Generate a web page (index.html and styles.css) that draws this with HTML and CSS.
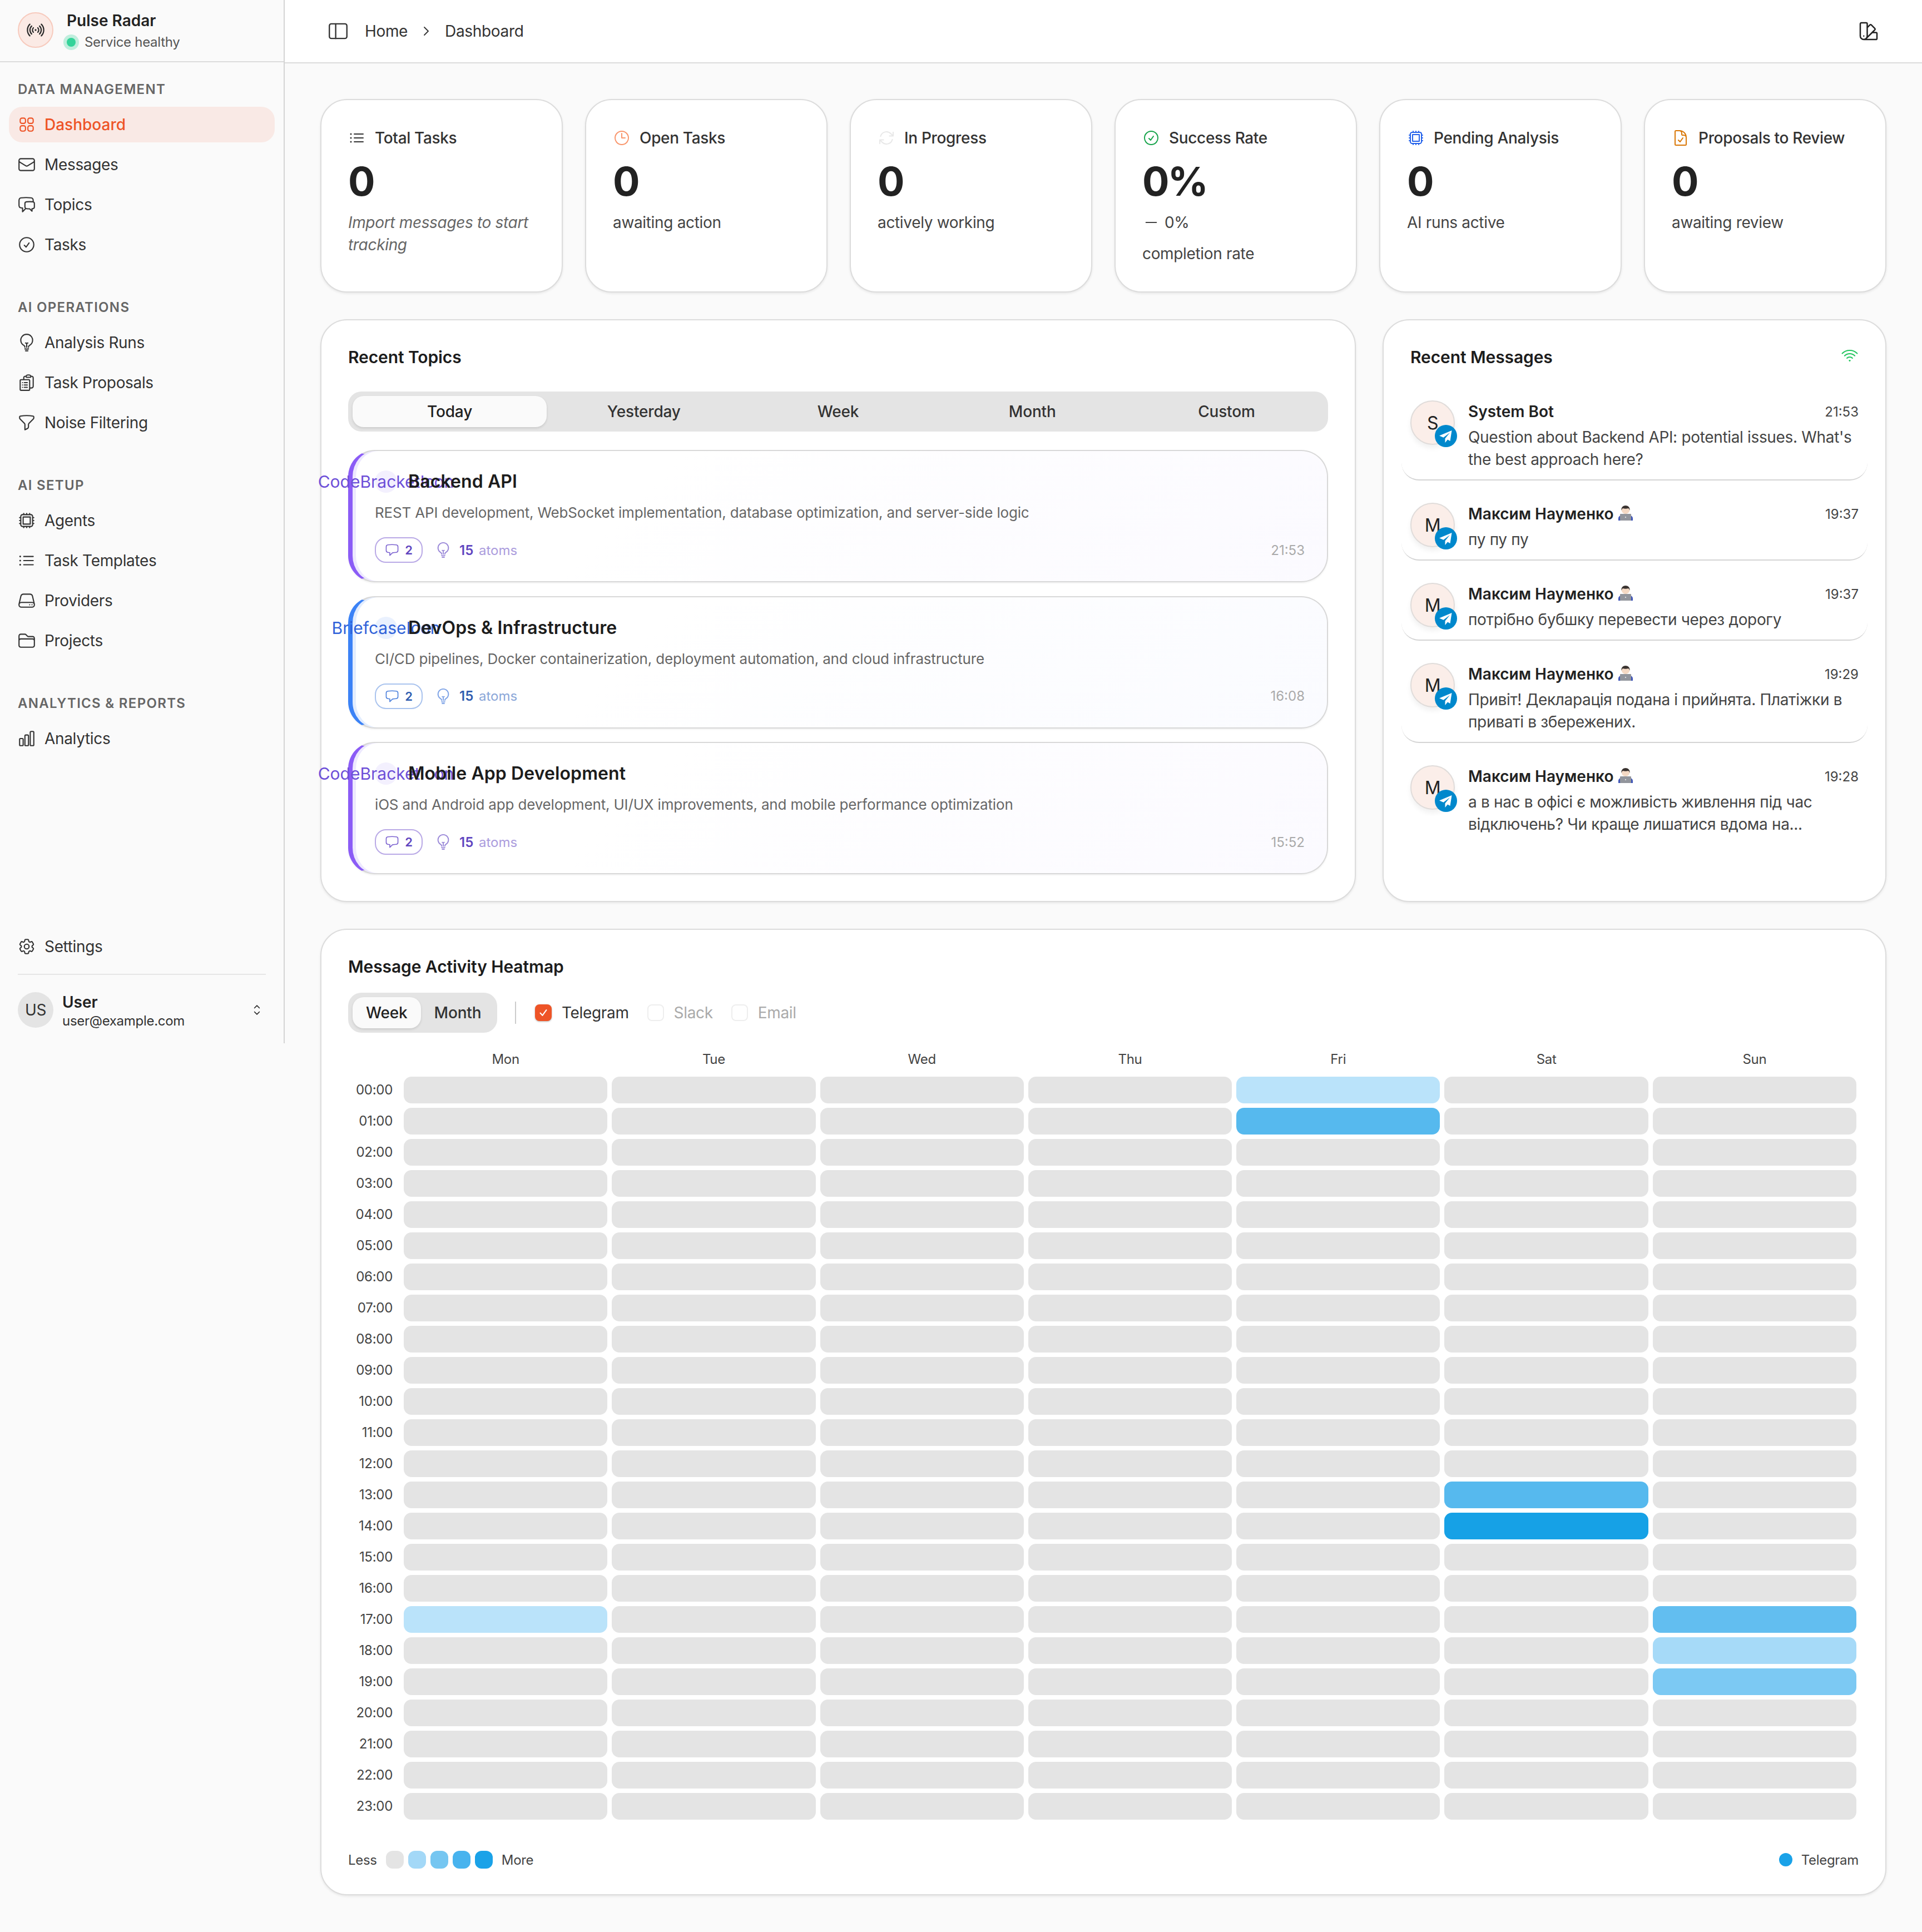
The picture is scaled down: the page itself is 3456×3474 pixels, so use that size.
FILE: index.html
```html
<!DOCTYPE html>
<html lang="en">
<head>
<meta charset="utf-8">
<title>Pulse Radar</title>
<link rel="stylesheet" href="styles.css">
</head>
<body>
<svg class="sprite" xmlns="http://www.w3.org/2000/svg">
<symbol id="i-grid" viewBox="0 0 24 24"><path d="M3.75 6A2.25 2.25 0 0 1 6 3.75h2.25A2.25 2.25 0 0 1 10.5 6v2.25a2.25 2.25 0 0 1-2.25 2.25H6a2.25 2.25 0 0 1-2.25-2.25V6ZM3.75 15.75A2.25 2.25 0 0 1 6 13.5h2.25a2.25 2.25 0 0 1 2.25 2.25V18a2.25 2.25 0 0 1-2.25 2.25H6A2.25 2.25 0 0 1 3.75 18v-2.25ZM13.5 6a2.25 2.25 0 0 1 2.25-2.25H18A2.25 2.25 0 0 1 20.25 6v2.25A2.25 2.25 0 0 1 18 10.5h-2.25a2.25 2.25 0 0 1-2.25-2.25V6ZM13.5 15.75a2.25 2.25 0 0 1 2.25-2.25H18a2.25 2.25 0 0 1 2.25 2.25V18A2.25 2.25 0 0 1 18 20.25h-2.25A2.25 2.25 0 0 1 13.5 18v-2.25Z"/></symbol>
<symbol id="i-mail" viewBox="0 0 24 24"><path d="M21.75 6.75v10.5a2.25 2.25 0 0 1-2.25 2.25h-15a2.25 2.25 0 0 1-2.25-2.25V6.75m19.5 0A2.25 2.25 0 0 0 19.5 4.5h-15a2.25 2.25 0 0 0-2.25 2.25m19.5 0v.243a2.25 2.25 0 0 1-1.07 1.916l-7.5 4.615a2.25 2.25 0 0 1-2.36 0L3.32 8.91a2.25 2.25 0 0 1-1.07-1.916V6.75"/></symbol>
<symbol id="i-chats" viewBox="0 0 24 24"><path d="M20.25 8.511c.884.284 1.5 1.128 1.5 2.097v4.286c0 1.136-.847 2.1-1.98 2.193-.34.027-.68.052-1.02.072v3.091l-3-3c-1.354 0-2.694-.055-4.02-.163a2.115 2.115 0 0 1-.825-.242m9.345-8.334a2.126 2.126 0 0 0-.476-.095 48.64 48.64 0 0 0-8.048 0c-1.131.094-1.976 1.057-1.976 2.192v4.286c0 .837.46 1.58 1.155 1.951m9.345-8.334V6.637c0-1.621-1.152-3.026-2.76-3.235A48.455 48.455 0 0 0 11.25 3c-2.115 0-4.198.137-6.24.402-1.608.209-2.76 1.614-2.76 3.235v6.226c0 1.621 1.152 3.026 2.76 3.235.577.075 1.157.14 1.74.194V21l4.155-4.155"/></symbol>
<symbol id="i-check" viewBox="0 0 24 24"><path d="M9 12.75 11.25 15 15 9.75M21 12a9 9 0 1 1-18 0 9 9 0 0 1 18 0Z"/></symbol>
<symbol id="i-bulb" viewBox="0 0 24 24"><path d="M12 18v-5.25m0 0a6.01 6.01 0 0 0 1.5-.189m-1.5.189a6.01 6.01 0 0 1-1.5-.189m3.75 7.478a12.06 12.06 0 0 1-4.5 0m3.75 2.383a14.406 14.406 0 0 1-3 0M14.25 18v-.192c0-.983.658-1.823 1.508-2.316a7.5 7.5 0 1 0-7.517 0c.85.493 1.509 1.333 1.509 2.316V18"/></symbol>
<symbol id="i-clip" viewBox="0 0 24 24"><path d="M9 12h3.75M9 15h3.75M9 18h3.75m3 .75H18a2.25 2.25 0 0 0 2.25-2.25V6.108c0-1.135-.845-2.098-1.976-2.192a48.424 48.424 0 0 0-1.123-.08m-5.801 0c-.065.21-.1.433-.1.664 0 .414.336.75.75.75h4.5a.75.75 0 0 0 .75-.75 2.25 2.25 0 0 0-.1-.664m-5.8 0A2.251 2.251 0 0 1 13.5 2.25H15c1.012 0 1.867.668 2.15 1.586m-5.8 0c-.376.023-.75.05-1.124.08C9.095 4.01 8.25 4.973 8.25 6.108V8.25m0 0H4.875c-.621 0-1.125.504-1.125 1.125v11.25c0 .621.504 1.125 1.125 1.125h9.75c.621 0 1.125-.504 1.125-1.125V9.375c0-.621-.504-1.125-1.125-1.125H8.25ZM6.75 12h.008v.008H6.75V12Zm0 3h.008v.008H6.75V15Zm0 3h.008v.008H6.75V18Z"/></symbol>
<symbol id="i-funnel" viewBox="0 0 24 24"><path d="M12 3c2.755 0 5.455.232 8.083.678.533.09.917.556.917 1.096v1.044a2.25 2.25 0 0 1-.659 1.591l-5.432 5.432a2.25 2.25 0 0 0-.659 1.591v2.927a2.25 2.25 0 0 1-1.244 2.013L9.75 21v-6.568a2.25 2.25 0 0 0-.659-1.591L3.659 7.409A2.25 2.25 0 0 1 3 5.818V4.774c0-.54.384-1.006.917-1.096A48.32 48.32 0 0 1 12 3Z"/></symbol>
<symbol id="i-cpu" viewBox="0 0 24 24"><path d="M8.25 3v1.5M4.5 8.25H3m18 0h-1.5M4.5 12H3m18 0h-1.5m-15 3.75H3m18 0h-1.5M8.25 19.5V21M12 3v1.5m0 15V21m3.75-18v1.5m0 15V21m-9-1.5h10.5a2.25 2.25 0 0 0 2.25-2.25V6.75a2.25 2.25 0 0 0-2.25-2.25H6.75A2.25 2.25 0 0 0 4.5 6.75v10.5a2.25 2.25 0 0 0 2.25 2.25Zm.75-12h9v9h-9v-9Z"/></symbol>
<symbol id="i-list" viewBox="0 0 24 24"><path d="M8.25 6.75h12M8.25 12h12m-12 5.25h12M3.75 6.75h.007v.008H3.75V6.75Zm.375 0a.375.375 0 1 1-.75 0 .375.375 0 0 1 .75 0ZM3.75 12h.007v.008H3.75V12Zm.375 0a.375.375 0 1 1-.75 0 .375.375 0 0 1 .75 0Zm-.375 5.25h.007v.008H3.75v-.008Zm.375 0a.375.375 0 1 1-.75 0 .375.375 0 0 1 .75 0Z"/></symbol>
<symbol id="i-server" viewBox="0 0 24 24"><path d="M21.75 17.25v-.228a4.5 4.5 0 0 0-.12-1.03l-2.268-9.64a3.375 3.375 0 0 0-3.285-2.602H7.923a3.375 3.375 0 0 0-3.285 2.602l-2.268 9.64a4.5 4.5 0 0 0-.12 1.03v.228m19.5 0a3 3 0 0 1-3 3H5.25a3 3 0 0 1-3-3m19.5 0a3 3 0 0 0-3-3H5.25a3 3 0 0 0-3 3m16.5 0h.008v.008h-.008v-.008Zm-3 0h.008v.008h-.008v-.008Z"/></symbol>
<symbol id="i-folder" viewBox="0 0 24 24"><path d="M2.25 12.75V12A2.25 2.25 0 0 1 4.5 9.75h15A2.25 2.25 0 0 1 21.75 12v.75m-8.69-6.44-2.12-2.12a1.5 1.5 0 0 0-1.061-.44H4.5A2.25 2.25 0 0 0 2.25 6v12a2.25 2.25 0 0 0 2.25 2.25h15A2.25 2.25 0 0 0 21.75 18V9a2.25 2.25 0 0 0-2.25-2.25h-5.379a1.5 1.5 0 0 1-1.06-.44Z"/></symbol>
<symbol id="i-chart" viewBox="0 0 24 24"><path d="M3 13.125C3 12.504 3.504 12 4.125 12h2.25c.621 0 1.125.504 1.125 1.125v6.75C7.5 20.496 6.996 21 6.375 21h-2.25A1.125 1.125 0 0 1 3 19.875v-6.75ZM9.75 8.625c0-.621.504-1.125 1.125-1.125h2.25c.621 0 1.125.504 1.125 1.125v11.25c0 .621-.504 1.125-1.125 1.125h-2.25a1.125 1.125 0 0 1-1.125-1.125V8.625ZM16.5 4.125c0-.621.504-1.125 1.125-1.125h2.25C20.496 3 21 3.504 21 4.125v15.75c0 .621-.504 1.125-1.125 1.125h-2.25a1.125 1.125 0 0 1-1.125-1.125V4.125Z"/></symbol>
<symbol id="i-cog" viewBox="0 0 24 24"><path d="M9.594 3.94c.09-.542.56-.94 1.11-.94h2.593c.55 0 1.02.398 1.11.94l.213 1.281c.063.374.313.686.645.87.074.04.147.083.22.127.325.196.72.257 1.075.124l1.217-.456a1.125 1.125 0 0 1 1.37.49l1.296 2.247a1.125 1.125 0 0 1-.26 1.431l-1.003.827c-.293.241-.438.613-.43.992a7.723 7.723 0 0 1 0 .255c-.008.378.137.75.43.991l1.004.827c.424.35.534.955.26 1.43l-1.298 2.247a1.125 1.125 0 0 1-1.369.491l-1.217-.456c-.355-.133-.75-.072-1.076.124a6.47 6.47 0 0 1-.22.128c-.331.183-.581.495-.644.869l-.213 1.281c-.09.543-.56.94-1.11.94h-2.594c-.55 0-1.019-.398-1.11-.94l-.213-1.281c-.062-.374-.312-.686-.644-.87a6.52 6.52 0 0 1-.22-.127c-.325-.196-.72-.257-1.076-.124l-1.217.456a1.125 1.125 0 0 1-1.369-.49l-1.297-2.247a1.125 1.125 0 0 1 .26-1.431l1.004-.827c.292-.24.437-.613.43-.991a6.932 6.932 0 0 1 0-.255c.007-.38-.138-.751-.43-.992l-1.004-.827a1.125 1.125 0 0 1-.26-1.43l1.297-2.247a1.125 1.125 0 0 1 1.37-.491l1.216.456c.356.133.751.072 1.076-.124.072-.044.146-.086.22-.128.332-.183.582-.495.644-.869l.214-1.28Z"/><path d="M15 12a3 3 0 1 1-6 0 3 3 0 0 1 6 0Z"/></symbol>
<symbol id="i-updown" viewBox="0 0 24 24"><path d="M8.25 15 12 18.75 15.75 15m-7.5-6L12 5.25 15.75 9"/></symbol>
<symbol id="i-signal" viewBox="0 0 24 24"><path d="M9.348 14.652a3.75 3.75 0 0 1 0-5.304m5.304 0a3.75 3.75 0 0 1 0 5.304m-7.425 2.121a6.75 6.75 0 0 1 0-9.546m9.546 0a6.75 6.75 0 0 1 0 9.546M5.106 18.894c-3.808-3.807-3.808-9.98 0-13.788m13.788 0c3.808 3.807 3.808 9.98 0 13.788M12 12h.008v.008H12V12Zm.375 0a.375.375 0 1 1-.75 0 .375.375 0 0 1 .75 0Z"/></symbol>
<symbol id="i-wifi" viewBox="0 0 24 24"><path d="M8.288 15.038a5.25 5.25 0 0 1 7.424 0M5.106 11.856c3.807-3.808 9.98-3.808 13.788 0M1.924 8.674c5.565-5.565 14.587-5.565 20.152 0M12.53 18.22l-.53.53-.53-.53a.75.75 0 0 1 1.06 0Z"/></symbol>
<symbol id="i-clock" viewBox="0 0 24 24"><path d="M12 6v6h4.5m4.5 0a9 9 0 1 1-18 0 9 9 0 0 1 18 0Z"/></symbol>
<symbol id="i-refresh" viewBox="0 0 24 24"><path d="M16.023 9.348h4.992v-.001M2.985 19.644v-4.992m0 0h4.992m-4.993 0 3.181 3.183a8.25 8.25 0 0 0 13.803-3.7M4.031 9.865a8.25 8.25 0 0 1 13.803-3.7l3.181 3.182m0-4.991v4.99"/></symbol>
<symbol id="i-doc" viewBox="0 0 24 24"><path d="M10.125 2.25h-4.5c-.621 0-1.125.504-1.125 1.125v17.25c0 .621.504 1.125 1.125 1.125h12.75c.621 0 1.125-.504 1.125-1.125v-9M10.125 2.25h.375a9 9 0 0 1 9 9v.375M10.125 2.25A3.375 3.375 0 0 1 13.5 5.625v1.5c0 .621.504 1.125 1.125 1.125h1.5a3.375 3.375 0 0 1 3.375 3.375M9 15l2.25 2.25L15 12"/></symbol>
<symbol id="i-bubble" viewBox="0 0 24 24"><path d="M2.25 12.76c0 1.6 1.123 2.994 2.707 3.227 1.087.16 2.185.283 3.293.369V21l4.076-4.076a1.526 1.526 0 0 1 1.037-.443 48.282 48.282 0 0 0 5.68-.494c1.584-.233 2.707-1.626 2.707-3.228V6.741c0-1.602-1.123-2.995-2.707-3.228A48.394 48.394 0 0 0 12 3c-2.392 0-4.744.175-7.043.513C3.373 3.746 2.25 5.14 2.25 6.741v6.018Z"/></symbol>
<symbol id="i-swatch" viewBox="0 0 24 24"><path d="M4.098 19.902a3.75 3.75 0 0 0 5.304 0l6.401-6.402M6.75 21A3.75 3.75 0 0 1 3 17.25V4.125C3 3.504 3.504 3 4.125 3h5.25c.621 0 1.125.504 1.125 1.125v4.072M6.75 21a3.75 3.75 0 0 0 3.75-3.75V8.197M6.75 21h13.125c.621 0 1.125-.504 1.125-1.125v-5.25c0-.621-.504-1.125-1.125-1.125h-4.072M10.5 8.197l2.88-2.88c.438-.439 1.15-.439 1.59 0l3.712 3.713c.44.44.44 1.152 0 1.59l-2.879 2.88M6.75 17.25h.008v.008H6.75v-.008Z"/></symbol>
<symbol id="i-panel" viewBox="0 0 24 24"><rect x="3" y="4.5" width="18" height="15" rx="2"/><path d="M9.5 4.5v15"/></symbol>
<symbol id="i-right" viewBox="0 0 24 24"><path d="m9 5 7 7-7 7"/></symbol>
<symbol id="i-minus" viewBox="0 0 24 24"><path d="M5 12h14"/></symbol>
<symbol id="i-tick" viewBox="0 0 24 24"><path d="m7 12.5 3.5 4L17 7.5"/></symbol>
<symbol id="i-tg" viewBox="0 0 40 40"><circle cx="20" cy="20" r="20" fill="#0088cc" stroke="none"/><path d="M30.5 10 8 19.5l7.5 3.2L27 14l-8.5 10.5V32l4.5-5.5 4.5 2.5Z" fill="#fff" stroke="none"/></symbol>
<symbol id="i-coder" viewBox="0 0 28 28"><path d="M1 28v-4c0-4 5-7 13-7s13 3 13 7v4Z" fill="#3f55b8" stroke="none"/><circle cx="14" cy="9" r="7.2" fill="#f4d9c4" stroke="none"/><path d="M6.6 10C5.6 4 10 1 14 1s8.4 3 7.4 9c-.6-2-1.4-3.6-2.4-4-3 1-7 1-10 0-1 .4-1.8 2-2.4 4Z" fill="#3a3330" stroke="none"/><rect x="4" y="16" width="20" height="12" rx="1" fill="#92959c" stroke="none"/><circle cx="14" cy="22" r="1.1" fill="#eee" stroke="none"/></symbol>
</svg>

<aside class="sidebar">
  <div class="brand">
    <div class="brand-logo"><svg class="ic ic-logo"><use href="#i-signal"/></svg></div>
    <div class="brand-text">
      <div class="brand-name">Pulse Radar</div>
      <div class="brand-status"><span class="dot"></span>Service healthy</div>
    </div>
  </div>
  <nav class="nav">
    <section class="group">
      <h3 class="group-label">Data Management</h3>
      <a class="item active"><svg class="ic"><use href="#i-grid"/></svg>Dashboard</a>
      <a class="item"><svg class="ic"><use href="#i-mail"/></svg>Messages</a>
      <a class="item"><svg class="ic"><use href="#i-chats"/></svg>Topics</a>
      <a class="item"><svg class="ic"><use href="#i-check"/></svg>Tasks</a>
    </section>
    <section class="group">
      <h3 class="group-label">AI Operations</h3>
      <a class="item"><svg class="ic"><use href="#i-bulb"/></svg>Analysis Runs</a>
      <a class="item"><svg class="ic"><use href="#i-clip"/></svg>Task Proposals</a>
      <a class="item"><svg class="ic"><use href="#i-funnel"/></svg>Noise Filtering</a>
    </section>
    <section class="group">
      <h3 class="group-label">AI Setup</h3>
      <a class="item"><svg class="ic"><use href="#i-cpu"/></svg>Agents</a>
      <a class="item"><svg class="ic"><use href="#i-list"/></svg>Task Templates</a>
      <a class="item"><svg class="ic"><use href="#i-server"/></svg>Providers</a>
      <a class="item"><svg class="ic"><use href="#i-folder"/></svg>Projects</a>
    </section>
    <section class="group">
      <h3 class="group-label">Analytics &amp; Reports</h3>
      <a class="item"><svg class="ic"><use href="#i-chart"/></svg>Analytics</a>
    </section>
  </nav>
  <div class="side-foot">
    <a class="item"><svg class="ic"><use href="#i-cog"/></svg>Settings</a>
    <div class="side-rule"></div>
    <div class="user">
      <div class="user-av">US</div>
      <div class="user-text">
        <div class="user-name">User</div>
        <div class="user-mail">user@example.com</div>
      </div>
      <svg class="ic ic-sm"><use href="#i-updown"/></svg>
    </div>
  </div>
</aside>

<div class="main">
  <header class="topbar">
    <div class="crumbs">
      <svg class="ic ic-panel"><use href="#i-panel"/></svg>
      <span class="crumb">Home</span>
      <svg class="ic ic-chev"><use href="#i-right"/></svg>
      <span class="crumb">Dashboard</span>
    </div>
    <svg class="ic ic-top"><use href="#i-swatch"/></svg>
  </header>

  <main class="content">
    <div class="stats">
      <div class="card stat">
        <div class="stat-head"><svg class="ic"><use href="#i-list"/></svg>Total Tasks</div>
        <div class="stat-num">0</div>
        <div class="stat-sub stat-hint">Import messages to start tracking</div>
      </div>
      <div class="card stat">
        <div class="stat-head"><svg class="ic c-orange"><use href="#i-clock"/></svg>Open Tasks</div>
        <div class="stat-num">0</div>
        <div class="stat-sub">awaiting action</div>
      </div>
      <div class="card stat">
        <div class="stat-head"><svg class="ic c-faint"><use href="#i-refresh"/></svg>In Progress</div>
        <div class="stat-num">0</div>
        <div class="stat-sub">actively working</div>
      </div>
      <div class="card stat">
        <div class="stat-head"><svg class="ic c-green"><use href="#i-check"/></svg>Success Rate</div>
        <div class="stat-num">0%</div>
        <div class="stat-sub stat-trend"><svg class="ic"><use href="#i-minus"/></svg>0%</div>
        <div class="stat-sub stat-extra">completion rate</div>
      </div>
      <div class="card stat">
        <div class="stat-head"><svg class="ic c-blue"><use href="#i-cpu"/></svg>Pending Analysis</div>
        <div class="stat-num">0</div>
        <div class="stat-sub">AI runs active</div>
      </div>
      <div class="card stat">
        <div class="stat-head"><svg class="ic c-amber"><use href="#i-doc"/></svg>Proposals to Review</div>
        <div class="stat-num">0</div>
        <div class="stat-sub">awaiting review</div>
      </div>
    </div>

    <div class="split">
      <section class="card panel">
        <h2 class="panel-title">Recent Topics</h2>
        <div class="tabs">
          <button class="tab on">Today</button>
          <button class="tab">Yesterday</button>
          <button class="tab">Week</button>
          <button class="tab">Month</button>
          <button class="tab">Custom</button>
        </div>
        <div class="topics">
          <article class="topic">
            <div class="topic-head"><div class="topic-ico t-purple">CodeBracketIcon</div><h4 class="topic-title">Backend API</h4></div>
            <p class="topic-desc">REST API development, WebSocket implementation, database optimization, and server-side logic</p>
            <div class="topic-meta">
              <span class="chip"><svg class="ic ic-xs"><use href="#i-bubble"/></svg>2</span>
              <svg class="ic ic-bulb"><use href="#i-bulb"/></svg>
              <span class="atoms"><b>15</b> atoms</span>
              <span class="topic-time">21:53</span>
            </div>
          </article>
          <article class="topic topic-blue">
            <div class="topic-head"><div class="topic-ico t-blue">BriefcaseIcon</div><h4 class="topic-title">DevOps &amp; Infrastructure</h4></div>
            <p class="topic-desc">CI/CD pipelines, Docker containerization, deployment automation, and cloud infrastructure</p>
            <div class="topic-meta">
              <span class="chip chip-blue"><svg class="ic ic-xs"><use href="#i-bubble"/></svg>2</span>
              <svg class="ic ic-bulb ic-bulb-blue"><use href="#i-bulb"/></svg>
              <span class="atoms atoms-blue"><b>15</b> atoms</span>
              <span class="topic-time">16:08</span>
            </div>
          </article>
          <article class="topic">
            <div class="topic-head"><div class="topic-ico t-purple">CodeBracketIcon</div><h4 class="topic-title">Mobile App Development</h4></div>
            <p class="topic-desc">iOS and Android app development, UI/UX improvements, and mobile performance optimization</p>
            <div class="topic-meta">
              <span class="chip"><svg class="ic ic-xs"><use href="#i-bubble"/></svg>2</span>
              <svg class="ic ic-bulb"><use href="#i-bulb"/></svg>
              <span class="atoms"><b>15</b> atoms</span>
              <span class="topic-time">15:52</span>
            </div>
          </article>
        </div>
      </section>

      <section class="card panel">
        <div class="panel-head"><h2 class="panel-title">Recent Messages</h2><svg class="ic c-wifi"><use href="#i-wifi"/></svg></div>
        <div class="msgs">
          <div class="msg">
            <div class="msg-av">S<svg class="tg"><use href="#i-tg"/></svg></div>
            <div class="msg-body">
              <div class="msg-top"><span class="msg-name">System Bot</span><span class="msg-time">21:53</span></div>
              <p class="msg-text">Question about Backend API: potential issues. What's the best approach here?</p>
            </div>
          </div>
          <div class="msg">
            <div class="msg-av">M<svg class="tg"><use href="#i-tg"/></svg></div>
            <div class="msg-body">
              <div class="msg-top"><span class="msg-name">Максим Науменко<svg class="emoji"><use href="#i-coder"/></svg></span><span class="msg-time">19:37</span></div>
              <p class="msg-text">пу пу пу</p>
            </div>
          </div>
          <div class="msg">
            <div class="msg-av">M<svg class="tg"><use href="#i-tg"/></svg></div>
            <div class="msg-body">
              <div class="msg-top"><span class="msg-name">Максим Науменко<svg class="emoji"><use href="#i-coder"/></svg></span><span class="msg-time">19:37</span></div>
              <p class="msg-text">потрібно бубшку перевести через дорогу</p>
            </div>
          </div>
          <div class="msg">
            <div class="msg-av">M<svg class="tg"><use href="#i-tg"/></svg></div>
            <div class="msg-body">
              <div class="msg-top"><span class="msg-name">Максим Науменко<svg class="emoji"><use href="#i-coder"/></svg></span><span class="msg-time">19:29</span></div>
              <p class="msg-text">Привіт! Декларація подана і прийнята. Платіжки в приваті в збережених.</p>
            </div>
          </div>
          <div class="msg msg-last">
            <div class="msg-av">M<svg class="tg"><use href="#i-tg"/></svg></div>
            <div class="msg-body">
              <div class="msg-top"><span class="msg-name">Максим Науменко<svg class="emoji"><use href="#i-coder"/></svg></span><span class="msg-time">19:28</span></div>
              <p class="msg-text">а в нас в офісі є можливість живлення під час відключень? Чи краще лишатися вдома на...</p>
            </div>
          </div>
        </div>
      </section>
    </div>

    <section class="card panel heat">
      <h2 class="panel-title">Message Activity Heatmap</h2>
      <div class="heat-bar">
        <div class="tabs tabs-inline">
          <button class="tab on">Week</button>
          <button class="tab">Month</button>
        </div>
        <span class="vr"></span>
        <label class="src"><span class="cb cb-on"><svg class="ic"><use href="#i-tick"/></svg></span>Telegram</label>
        <label class="src src-off"><span class="cb"></span>Slack</label>
        <label class="src src-off"><span class="cb"></span>Email</label>
      </div>
      <div class="grid">
        <span></span><span class="day">Mon</span><span class="day">Tue</span><span class="day">Wed</span><span class="day">Thu</span><span class="day">Fri</span><span class="day">Sat</span><span class="day">Sun</span>
        <span class="hr">00:00</span><i></i><i></i><i></i><i></i><i class="l1"></i><i></i><i></i>
        <span class="hr">01:00</span><i></i><i></i><i></i><i></i><i class="l3"></i><i></i><i></i>
        <span class="hr">02:00</span><i></i><i></i><i></i><i></i><i></i><i></i><i></i>
        <span class="hr">03:00</span><i></i><i></i><i></i><i></i><i></i><i></i><i></i>
        <span class="hr">04:00</span><i></i><i></i><i></i><i></i><i></i><i></i><i></i>
        <span class="hr">05:00</span><i></i><i></i><i></i><i></i><i></i><i></i><i></i>
        <span class="hr">06:00</span><i></i><i></i><i></i><i></i><i></i><i></i><i></i>
        <span class="hr">07:00</span><i></i><i></i><i></i><i></i><i></i><i></i><i></i>
        <span class="hr">08:00</span><i></i><i></i><i></i><i></i><i></i><i></i><i></i>
        <span class="hr">09:00</span><i></i><i></i><i></i><i></i><i></i><i></i><i></i>
        <span class="hr">10:00</span><i></i><i></i><i></i><i></i><i></i><i></i><i></i>
        <span class="hr">11:00</span><i></i><i></i><i></i><i></i><i></i><i></i><i></i>
        <span class="hr">12:00</span><i></i><i></i><i></i><i></i><i></i><i></i><i></i>
        <span class="hr">13:00</span><i></i><i></i><i></i><i></i><i></i><i class="l3"></i><i></i>
        <span class="hr">14:00</span><i></i><i></i><i></i><i></i><i></i><i class="l4"></i><i></i>
        <span class="hr">15:00</span><i></i><i></i><i></i><i></i><i></i><i></i><i></i>
        <span class="hr">16:00</span><i></i><i></i><i></i><i></i><i></i><i></i><i></i>
        <span class="hr">17:00</span><i class="l1"></i><i></i><i></i><i></i><i></i><i></i><i class="l3b"></i>
        <span class="hr">18:00</span><i></i><i></i><i></i><i></i><i></i><i></i><i class="l1b"></i>
        <span class="hr">19:00</span><i></i><i></i><i></i><i></i><i></i><i></i><i class="l2"></i>
        <span class="hr">20:00</span><i></i><i></i><i></i><i></i><i></i><i></i><i></i>
        <span class="hr">21:00</span><i></i><i></i><i></i><i></i><i></i><i></i><i></i>
        <span class="hr">22:00</span><i></i><i></i><i></i><i></i><i></i><i></i><i></i>
        <span class="hr">23:00</span><i></i><i></i><i></i><i></i><i></i><i></i><i></i>
      </div>
      <div class="legend">
        <div class="legend-scale">Less<span class="sw sw0"></span><span class="sw sw1"></span><span class="sw sw2"></span><span class="sw sw3"></span><span class="sw sw4"></span>More</div>
        <div class="legend-src"><span class="legend-dot"></span>Telegram</div>
      </div>
    </section>
  </main>
</div>
</body>
</html>
```
FILE: styles.css
```css
* { box-sizing: border-box; }
html, body { margin: 0; padding: 0; }
body {
  display: flex;
  align-items: flex-start;
  background: #fafafa;
  color: #2b2b2b;
  font-family: Inter, "Noto Sans", sans-serif;
  font-size: 28px;
}
body * { letter-spacing: -0.012em; }
h2, h3, h4, p { margin: 0; }
.sprite { display: none; }
.ic {
  width: 32px; height: 32px; flex: none;
  fill: none; stroke: currentColor; stroke-width: 1.5;
  stroke-linecap: round; stroke-linejoin: round;
}

/* Sidebar */
.sidebar {
  width: 512px; height: 1876px; flex: none;
  display: flex; flex-direction: column;
  background: #fafafa;
  border-right: 2px solid #d4d4d4;
}
.brand {
  height: 112px; flex: none;
  display: flex; align-items: center; gap: 24px;
  padding: 0 32px 2px;
  border-bottom: 2px solid #dcdcdc;
}
.brand-logo {
  width: 64px; height: 64px; border-radius: 50%;
  background: #fbeae5; border: 2px solid #f7cabd;
  display: flex; align-items: center; justify-content: center;
}
.ic-logo { width: 36px; height: 36px; }
.brand-name { font-weight: 600; font-size: 28px; line-height: 40px; color: #222; letter-spacing: 0; }
.brand-status { display: flex; align-items: center; gap: 10px; margin: 2px 0 -2px -6px; font-size: 24px; line-height: 34px; color: #555; }
.dot { width: 16px; height: 16px; margin: 6px; border-radius: 50%; background: #34d399; box-shadow: 0 0 0 6px #bfeedd; }
.nav { display: flex; flex-direction: column; gap: 16px; }
.group { padding: 16px; display: flex; flex-direction: column; gap: 8px; }
.group-label {
  height: 64px; margin-bottom: -8px; padding: 0 16px;
  display: flex; align-items: center;
  font-size: 24px; font-weight: 600; letter-spacing: 1.3px; text-transform: uppercase; color: #666;
}
.item {
  height: 64px; display: flex; align-items: center; gap: 16px;
  padding: 0 16px; border-radius: 24px;
  font-size: 28px; color: #333;
}
.item .ic { width: 34px; height: 34px; margin: 0 -1px; }
.item.active { background: #f9e9e5; color: #ee5427; font-weight: 500; letter-spacing: 0; }
.side-foot { margin-top: auto; padding: 0 16px 24px; display: flex; flex-direction: column; }
.side-rule { height: 2px; background: #e6e6e6; margin: 17px 16px 27px; }
.user { display: flex; align-items: center; gap: 16px; padding: 0 16px; }
.user-av { width: 64px; height: 64px; border-radius: 50%; background: #e4e4e4; display: flex; align-items: center; justify-content: center; font-size: 28px; color: #333; }
.user-text { flex: 1; padding-top: 6px; }
.user-name { font-size: 28px; font-weight: 600; line-height: 32px; color: #222; letter-spacing: 0; }
.user-mail { margin-top: 2px; font-size: 24px; line-height: 32px; color: #333; }
.ic-sm { width: 28px; height: 28px; margin-right: 2px; }

/* Top bar */
.main { flex: 1; min-width: 0; display: flex; flex-direction: column; }
.topbar {
  height: 114px; flex: none;
  display: flex; align-items: center; justify-content: space-between;
  padding: 0 76px 0 75px;
  background: #fff;
  border-bottom: 2px solid #dcdcdc;
}
.crumbs { display: flex; align-items: center; gap: 27px; color: #333; }
.crumb { font-size: 28px; }
.ic-panel { width: 42px; height: 42px; stroke-width: 1.35; }
.ic-top { width: 40px; height: 40px; color: #222; }
.ic-chev { width: 24px; height: 24px; margin: 0 -5px 0 -6px; stroke-width: 1.8; }

/* Cards */
.content { padding: 64px; display: flex; flex-direction: column; gap: 48px; }
.card {
  background: #fff; border: 2px solid #dcdcdc; border-radius: 48px;
  box-shadow: 0 2px 4px rgba(0,0,0,.08);
}
.stats { display: grid; grid-template-columns: repeat(6, 1fr); gap: 40px; }
.stat { padding: 48px; height: 348px; }
.stat-head { display: flex; align-items: center; gap: 16px; height: 40px; font-weight: 500; color: #333; }
.stat-num { margin-top: 18px; font-size: 72px; font-weight: 700; line-height: 80px; color: #222; letter-spacing: -0.04em; }
.stat-sub { margin-top: 14px; line-height: 40px; color: #444; }
.stat-hint { font-style: italic; color: #666; }
.stat-trend { display: flex; align-items: center; gap: 8px; }
.stat-extra { margin-top: 16px; }
.c-orange { color: #f9956b; }
.c-faint { color: #e8e8e8; }
.c-green { color: #16a34a; }
.c-blue { color: #2563eb; }
.c-amber { color: #d97706; }
.c-wifi { color: #22c55e; }

.split { display: grid; grid-template-columns: 1862px 906px; gap: 48px; }
.panel { padding: 48px; height: 1048px; }
.panel-title { font-size: 30px; line-height: 36px; font-weight: 600; color: #1c1c1c; letter-spacing: -0.1px; }
.panel-head { display: flex; justify-content: space-between; align-items: flex-start; }
.tabs {
  margin-top: 44px; height: 72px; padding: 8px;
  display: grid; grid-template-columns: repeat(5, 1fr);
  background: #e4e4e4; border-radius: 24px;
}
.tab {
  border: 0; background: none; padding: 0; border-radius: 20px;
  font: 500 28px Inter, "Noto Sans", sans-serif; color: #333; letter-spacing: -0.006em;
}
.tab.on { background: #fafafa; color: #222; box-shadow: 0 2px 4px rgba(0,0,0,.12); }
.topics { margin-top: 33px; display: flex; flex-direction: column; gap: 24.5px; }
.topic {
  height: 238px; padding: 35px 40px 0 40px;
  border: 2px solid #d8d8d8; border-left: 8px solid #8b5cf6; border-radius: 48px;
  background: linear-gradient(135deg, #fff 30%, #fbfaff 100%);
  box-shadow: inset 6px 0 0 #ede9fe, 0 2px 3px rgba(0,0,0,.05);
}
.topic-blue { border-left-color: #3b82f6; box-shadow: inset 6px 0 0 #e3edfe, 0 2px 3px rgba(0,0,0,.05); background: linear-gradient(135deg, #fff 30%, #fafbff 100%); }
.topic-head { display: flex; align-items: center; gap: 20px; height: 40px; }
.topic-ico {
  width: 40px; height: 40px; flex: none; border-radius: 50%;
  display: flex; align-items: center; justify-content: center;
  white-space: nowrap; font-size: 30px; letter-spacing: 0;
}
.t-purple { color: #6d4fd8; background: #f3f0fe; }
.t-blue { color: #2f62d9; background: #eaf1fe; }
.topic-title { font-size: 32px; font-weight: 600; line-height: 40px; color: #1c1c1c; letter-spacing: 0.1px; }
.topic-desc { margin-top: 16px; font-size: 26px; line-height: 40px; color: #666; letter-spacing: -0.17px; }
.topic-meta { margin-top: 24px; height: 46px; display: flex; align-items: center; }
.chip {
  width: 86px; height: 46px; border: 2px solid #b9a9e6; border-radius: 20px;
  display: flex; align-items: center; justify-content: center; gap: 10px;
  font-size: 22px; font-weight: 600; color: #5f45c0;
}
.chip-blue { border-color: #a9c3ee; color: #2f5db0; }
.ic-xs { width: 26px; height: 26px; color: #7c63d0; }
.chip-blue .ic-xs { color: #4a7fdc; }
.ic-bulb { width: 30px; height: 30px; margin-left: 22px; color: #9a88d8; }
.ic-bulb-blue { color: #7ea3e6; }
.atoms { margin-left: 14px; font-size: 24px; color: #ab9cdd; letter-spacing: 0; }
.atoms b { font-weight: 600; color: #5f45c0; margin-right: 3px; letter-spacing: 0; }
.atoms-blue { color: #8aa6d8; }
.atoms-blue b { color: #2f5db0; }
.topic-time { margin-left: auto; font-size: 24px; color: #aaa; letter-spacing: 0; }

/* Messages */
.msgs { margin: 44px -16px 0; display: flex; flex-direction: column; gap: 24px; }
.msg {
  display: flex; gap: 24px; padding: 16px;
  border-bottom: 2px solid #d4d4d4; border-radius: 32px;
}
.msg-last { border-bottom: 0; }
.msg-av {
  position: relative; width: 80px; height: 80px; flex: none; border-radius: 50%;
  background: #fbeee9; border: 2px solid #e0dcda;
  display: flex; align-items: center; justify-content: center;
  font-size: 32px; color: #222;
  box-shadow: 0 6px 10px rgba(0,0,0,.06);
}
.tg { position: absolute; right: -6px; bottom: -6px; width: 40px; height: 40px; }
.msg-body { flex: 1; min-width: 0; }
.msg-top { display: flex; justify-content: space-between; align-items: center; height: 40px; }
.msg-name { display: flex; align-items: center; gap: 8px; font-weight: 600; color: #222; letter-spacing: 0; }
.emoji { width: 28px; height: 28px; margin-top: -4px; }
.msg-time { font-size: 24px; color: #444; letter-spacing: 0; }
.msg-text { margin-top: 6px; line-height: 40px; color: #444; }

/* Heatmap */
.heat { height: 1738px; }
.heat-bar { margin-top: 29px; display: flex; align-items: center; }
.tabs-inline { margin-top: 0; display: flex; width: 268px; }
.tabs-inline .tab { height: 56px; padding: 0 24px; }
.vr { width: 2px; height: 40px; background: #ccc; margin: 0 34px 0 32px; }
.src { display: flex; align-items: center; gap: 18px; margin-right: 33px; color: #333; }
.src-off { color: #aaa; }
.cb { width: 30px; height: 30px; border-radius: 8px; border: 2px solid #eee; background: #fff; display: flex; align-items: center; justify-content: center; }
.cb-on { background: #ee5427; border-color: #ee5427; color: #fff; box-shadow: 0 1px 3px rgba(0,0,0,.3); }
.cb-on .ic { width: 26px; height: 26px; stroke-width: 2; }
.grid {
  margin: 28px 4px 0 0; display: grid;
  grid-template-columns: 92px repeat(7, 1fr);
  grid-template-rows: 43px; grid-auto-rows: 48px; gap: 8px;
}
.day { text-align: center; font-size: 24px; line-height: 40px; color: #444; }
.hr { text-align: right; font-size: 24px; line-height: 48px; color: #444; padding-right: 12px; }
.grid i { display: block; background: #e4e4e4; border-radius: 14px; }
.grid i.l1 { background: #bae3fa; }
.grid i.l1b { background: #a6daf8; }
.grid i.l2 { background: #7cc9f3; }
.grid i.l3 { background: #56b9ee; }
.grid i.l3b { background: #62bef0; }
.grid i.l4 { background: #16a1e6; }
.legend { margin-top: 56px; display: flex; justify-content: space-between; align-items: center; font-size: 24px; color: #444; }
.legend-scale { display: flex; align-items: center; gap: 8px; }
.sw { width: 32px; height: 32px; border-radius: 12px; }
.sw0 { background: #e4e4e4; margin-left: 8px; }
.sw1 { background: #a3d8f7; }
.sw2 { background: #75c6f1; }
.sw3 { background: #48b3ee; }
.sw4 { background: #1aa2e8; margin-right: 8px; }
.legend-src { display: flex; align-items: center; gap: 16px; }
.legend-dot { width: 24px; height: 24px; border-radius: 50%; background: #1aa2e8; }
```
